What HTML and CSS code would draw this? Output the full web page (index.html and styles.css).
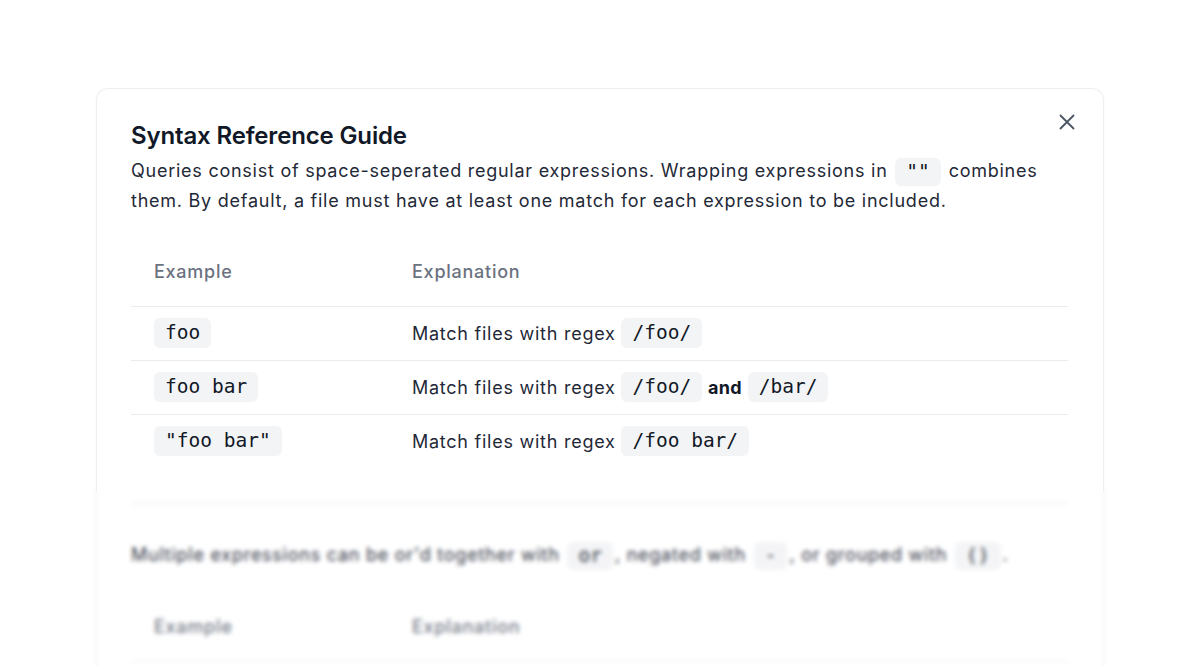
FILE: index.html
```html
<!DOCTYPE html>
<html lang="en">
<head>
<meta charset="utf-8">
<title>Syntax Reference Guide</title>
<link rel="stylesheet" href="styles.css">
</head>
<body>
<div class="page">
  <div class="modal">
    <button class="close" aria-label="Close">
      <svg width="16" height="16" viewBox="0 0 16 16" fill="none" stroke="currentColor" stroke-width="1.8" stroke-linecap="round"><path d="M1.5 1.5L14.5 14.5M14.5 1.5L1.5 14.5"/></svg>
    </button>
    <section class="section">
      <h2 class="title">Syntax Reference Guide</h2>
      <p class="desc">Queries consist of space-seperated regular expressions. Wrapping expressions in <code class="chip">""</code> combines them. By default, a file must have at least one match for each expression to be included.</p>
      <table class="ref">
        <colgroup><col class="col-ex"><col></colgroup>
        <thead>
          <tr><th>Example</th><th>Explanation</th></tr>
        </thead>
        <tbody>
          <tr><td><code class="chip">foo</code></td><td>Match files with regex <code class="chip">/foo/</code></td></tr>
          <tr><td><code class="chip">foo bar</code></td><td>Match files with regex <code class="chip">/foo/</code> <strong>and</strong> <code class="chip">/bar/</code></td></tr>
          <tr><td><code class="chip">"foo bar"</code></td><td>Match files with regex <code class="chip">/foo bar/</code></td></tr>
        </tbody>
      </table>
    </section>
    <hr class="divider">
    <section class="section">
      <p class="desc">Multiple expressions can be or'd together with <code class="chip">or</code>, negated with <code class="chip">-</code>, or grouped with <code class="chip">()</code>.</p>
      <table class="ref">
        <colgroup><col class="col-ex"><col></colgroup>
        <thead>
          <tr><th>Example</th><th>Explanation</th></tr>
        </thead>
      </table>
    </section>
  </div>
</div>
<div class="fade"></div>
</body>
</html>
```
FILE: styles.css
```css
html, body {
  margin: 0;
  padding: 0;
  background: #ffffff;
  height: 100%;
  overflow: hidden;
}

body {
  font-family: "Inter", "Noto Sans", sans-serif;
  color: #1f2937;
}

.page {
  padding: 88px 96px 0 96px;
}

.modal {
  position: relative;
  box-sizing: border-box;
  width: 1008px;
  border: 1px solid #eceef1;
  border-radius: 12px;
  padding: 31px 35px 40px 34px;
  background: #fff;
  box-shadow: 0 1px 3px rgba(17, 24, 39, 0.04);
}

.close {
  position: absolute;
  top: 21px;
  right: 24px;
  width: 24px;
  height: 24px;
  padding: 0;
  border: 0;
  background: transparent;
  color: #4b5563;
  display: flex;
  align-items: center;
  justify-content: center;
}

.title {
  margin: 0;
  font-size: 24px;
  line-height: 32px;
  font-weight: 600;
  color: #111827;
  letter-spacing: -0.15px;
}

.desc {
  margin: 4px 0 0 0;
  font-size: 18px;
  line-height: 29px;
  letter-spacing: 0.75px;
  color: #1f2937;
}

.chip {
  display: inline-block;
  font-family: "DejaVu Sans Mono", "Liberation Mono", monospace;
  font-size: 19.5px;
  line-height: 24px;
  letter-spacing: 0;
  padding: 3px 11px;
  border-radius: 6px;
  background: #f3f4f6;
  color: #111827;
  vertical-align: middle;
  margin-top: -3px;
}

.desc .chip {
  padding: 2px 11px;
  line-height: 24px;
  margin: 0 2px;
  vertical-align: middle;
}

.ref {
  width: 100%;
  table-layout: fixed;
  margin-top: 24px;
  border-collapse: collapse;
  font-size: 18px;
  line-height: 28px;
  letter-spacing: 0.75px;
}

.ref .col-ex {
  width: 258px;
}

.ref th {
  text-align: left;
  font-weight: 500;
  color: #6b7280;
  padding: 19px 23px 20px 23px;
  border-bottom: 1px solid #e8ebef;
}

.ref td {
  padding: 12px 23px 11px 23px;
  border-bottom: 1px solid #e8ebef;
  color: #1f2937;
  vertical-align: middle;
  height: 30px;
}

.ref tbody tr:last-child td {
  border-bottom: 0;
}

.ref strong {
  font-weight: 700;
  color: #111827;
  letter-spacing: 0.3px;
}

.divider {
  border: 0;
  border-top: 1px solid #e8ebef;
  margin: 35px 0 36px 0;
}

.section + .divider + .section .desc {
  margin-top: 0;
}

.fade {
  position: fixed;
  left: 0;
  right: 0;
  top: 490px;
  bottom: 0;
  background: rgba(255, 255, 255, 0.08);
  -webkit-backdrop-filter: blur(2.2px);
  backdrop-filter: blur(2.2px);
}
```
